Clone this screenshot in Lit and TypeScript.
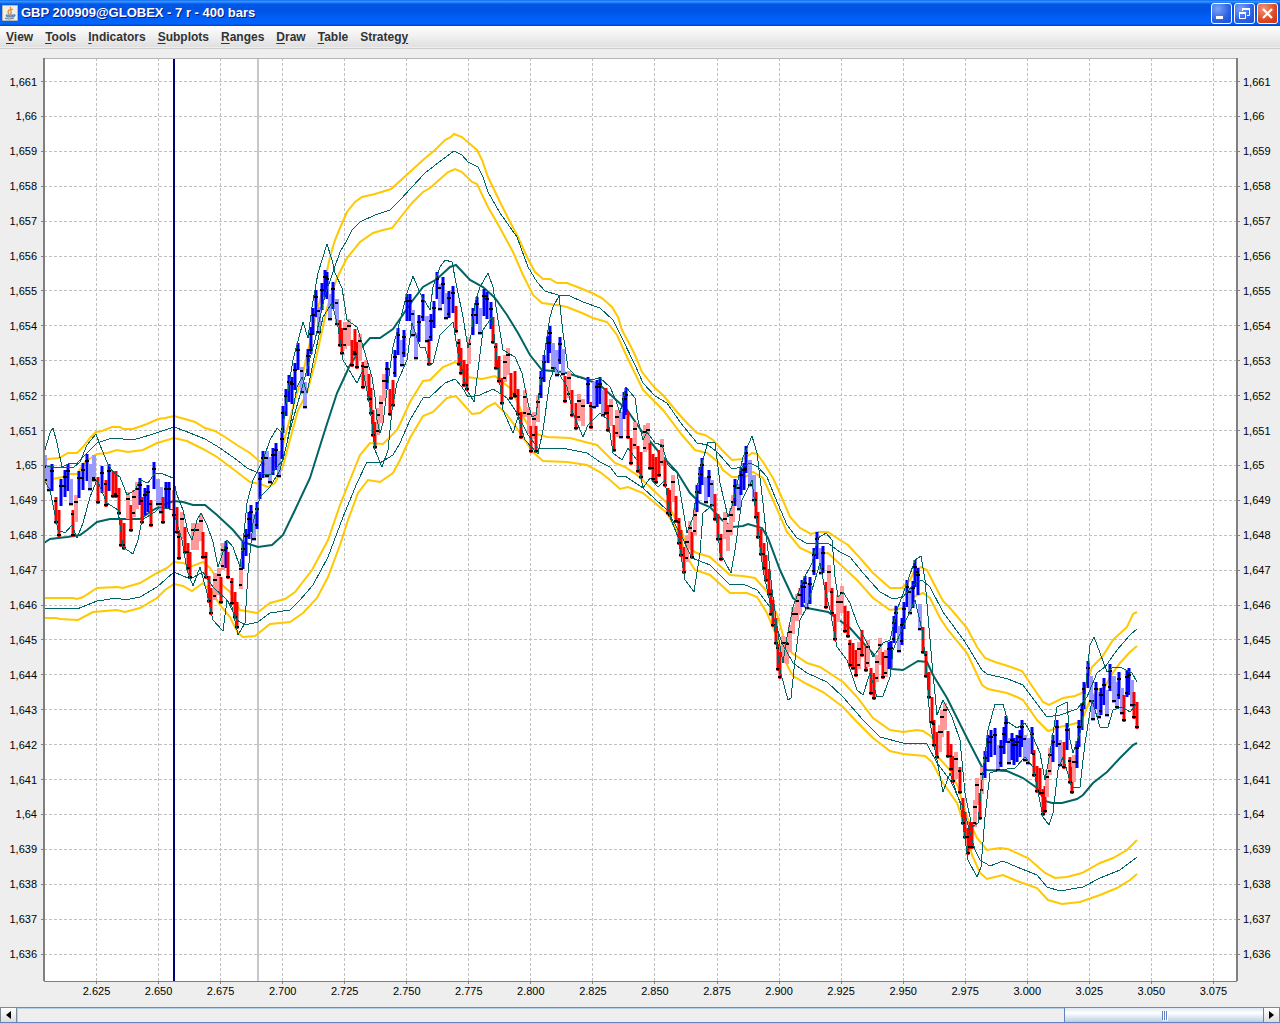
import { LitElement, html, svg, css } from "lit";
import { customElement, property } from "lit/decorators.js";

/* Plot space: the view box that all series are expressed in. */
const PLOT = { x: 44, y: 58, w: 1193, h: 923 };
const X_TICKS = Array.from({ length: 19 }, (_, i) => ({
  label: (2.625 + i * 0.025).toFixed(3),
  pos: 96.5 + i * 62.05,
}));
const Y_TICKS = Array.from({ length: 26 }, (_, i) => ({
  label: String((1661 - i) / 1000).replace(".", ","),
  pos: 81.5 + i * 34.9,
}));
const xPct = (x: number) => `${((x - PLOT.x) / PLOT.w) * 100}%`;
const yPct = (y: number) => `${((y - PLOT.y) / PLOT.h) * 100}%`;

/* Outer envelope edges. */
const ENVELOPES = [
  "44,462 48,459 59,458 68,453 77,453 83,447 90,438 96,432 102,431 112,427 120,427 123,429 133,429 147,424 158,419 165,418 174,416 185,419 195,422 205,428 215,431 225,437 237,445 250,453 258,460 270,467 280,457 285,437 295,400 303,373 315,320 325,280 330,257 335,240 340,228 347,212 355,202 362,197 375,194 391,189 400,181 412,170 423,160 435,150 445,140 451,137 454,134 462,137 470,144 477,150 482,160 488,177 500,202 510,222 518,237 527,257 535,272 543,279 550,279 557,283 567,283 580,288 592,293 602,298 612,307 618,317 622,330 630,345 635,355 642,372 650,382 655,388 663,395 677,412 687,423 697,433 705,435 713,440 722,450 732,460 743,459 752,453 757,454 763,462 773,478 782,498 790,517 800,528 811,534 818,532 828,532 840,540 848,545 860,558 873,573 890,588 902,588 910,580 915,570 921,567 927,570 933,582 943,601 950,608 967,628 977,647 985,658 995,662 1008,666 1022,671 1030,683 1043,702 1049,705 1063,698 1075,696 1082,693 1087,683 1092,667 1102,657 1113,640 1127,627 1133,614 1137,612",
  "44,485 47,480 63,477 67,474 77,474 85,462 97,454 107,453 117,450 128,452 143,450 157,443 174,438 187,441 203,449 217,457 237,472 250,482 260,484 268,487 275,483 283,466 288,447 298,410 307,393 315,363 327,308 337,278 347,258 360,242 373,233 383,230 392,228 400,218 412,203 423,192 430,188 448,172 455,169 462,172 472,182 477,184 488,207 500,228 513,252 523,275 533,295 542,303 557,305 567,307 582,313 593,318 607,322 617,335 627,357 643,390 655,402 663,410 682,435 695,450 707,453 718,462 723,470 732,477 745,477 753,472 763,478 773,500 787,532 800,548 813,554 828,553 843,567 857,580 873,598 890,610 903,608 913,597 923,593 930,598 940,618 948,630 967,653 982,685 988,689 1007,693 1017,697 1023,700 1037,720 1048,731 1060,727 1077,723 1082,720 1090,700 1097,690 1105,687 1110,677 1120,663 1130,652 1137,646",
  "44,598 73,598 77,599 83,597 97,588 117,587 123,588 140,583 157,573 167,568 174,562 183,563 190,567 203,562 210,568 220,583 230,592 240,610 257,613 270,603 285,599 295,592 312,570 328,540 340,505 348,485 360,455 370,443 383,444 397,430 400,424 410,402 423,381 430,380 443,367 455,362 462,366 467,377 482,379 495,376 510,388 518,403 525,420 533,433 547,437 570,438 585,442 597,445 605,453 615,463 625,467 637,475 650,487 667,503 680,527 687,547 697,553 710,557 730,575 743,576 755,578 763,587 768,593 778,617 785,643 792,653 807,663 820,667 843,682 857,697 873,718 890,730 903,732 917,730 923,731 932,737 938,757 950,770 958,787 967,817 977,838 987,850 1000,848 1008,849 1028,858 1045,873 1055,878 1067,877 1082,873 1100,863 1113,858 1127,850 1137,840",
  "44,618 56,618 60,619 78,620 93,612 117,610 125,612 140,608 157,598 165,590 174,584 183,586 192,591 203,583 212,592 220,605 230,617 238,633 243,637 255,636 270,624 290,622 303,613 317,598 328,577 340,545 348,520 358,493 368,480 380,482 393,473 400,460 410,438 423,416 433,412 447,398 456,396 472,414 480,413 487,407 495,403 507,415 518,430 533,452 543,461 567,462 587,465 600,472 610,480 620,489 628,487 643,493 667,513 678,533 687,557 695,570 710,575 730,593 747,593 757,597 767,613 777,637 788,667 793,676 807,684 823,692 843,707 857,722 873,738 890,751 903,754 925,756 932,762 943,783 957,803 967,833 972,855 980,873 987,879 1003,875 1017,881 1037,888 1048,900 1062,904 1080,902 1100,895 1117,888 1130,880 1137,874",
];

/* Thin lines: envelope midlines, then the fast channel. */
const THIN = [
  "44,465 47,466 60,468 70,463 77,463 87,453 97,443 112,438 133,440 150,435 174,427 185,431 205,439 220,448 237,460 247,468 258,473 270,475 283,460 290,430 300,395 315,340 325,295 333,272 340,252 347,240 352,230 360,222 375,215 390,210 400,200 412,187 425,173 443,159 454,151 462,155 468,162 478,167 483,177 488,192 500,213 517,237 528,267 537,282 545,291 558,295 570,296 583,302 600,308 613,320 622,338 635,365 643,383 655,396 667,403 680,422 697,443 708,445 717,452 732,469 742,467 750,463 758,467 767,477 775,497 787,525 797,538 808,544 828,543 840,552 850,557 863,573 880,592 893,599 903,597 913,585 922,580 930,587 943,612 965,642 982,670 987,674 1008,679 1023,685 1047,717 1060,715 1077,709 1087,697 1097,673 1105,667 1117,650 1130,635 1137,629",
  "44,608 77,609 97,601 117,598 125,600 140,597 157,587 174,572 190,579 203,572 213,587 227,600 237,620 245,625 258,622 270,613 290,610 300,600 313,585 328,557 343,517 357,483 367,462 380,463 393,455 400,443 410,420 423,398 430,397 445,383 455,379 462,387 468,397 480,395 493,389 507,398 517,413 528,435 538,448 567,449 587,453 600,462 610,467 617,476 625,476 643,488 667,510 680,533 692,558 710,565 730,585 743,584 757,590 770,607 782,643 793,663 807,673 827,682 843,697 863,720 880,737 903,743 927,744 937,763 950,780 963,807 975,850 980,860 990,866 1003,861 1017,867 1037,875 1047,887 1060,891 1083,887 1100,878 1120,870 1137,857",
  "44,453 50,433 53,428 57,443 62,467 73,468 80,462 87,445 96,434 100,445 107,462 113,472 120,477 127,495 135,490 140,480 148,483 155,473 163,474 173,478 177,495 183,510 188,532 192,540 197,520 201,513 207,525 213,542 218,567 227,540 233,547 240,567 243,543 247,503 253,480 263,460 270,440 277,428 282,433 287,397 293,360 303,322 308,338 312,307 318,273 327,244 332,260 335,273 342,288 347,320 357,327 362,343 367,360 372,377 375,397 377,420 380,433 383,423 387,390 393,347 402,313 407,293 413,276 420,293 430,310 433,287 440,267 445,260 452,262 457,288 463,317 468,348 471,335 475,303 480,287 488,273 493,287 498,320 503,350 515,357 522,373 528,403 532,417 536,415 543,363 550,317 553,307 559,296 563,333 568,368 577,377 590,380 600,378 610,387 615,398 620,413 626,387 635,398 638,420 643,440 647,432 655,443 662,445 668,465 677,473 682,503 687,533 693,517 700,470 708,442 715,443 720,483 728,517 733,503 743,457 752,436 757,453 763,503 772,590 779,640 783,663 787,637 793,607 803,580 812,563 818,538 826,533 832,540 835,577 838,597 843,592 850,603 857,623 867,643 873,657 883,643 890,640 897,610 907,583 915,560 921,556 925,580 932,663 937,715 943,700 952,717 960,740 965,793 972,827 978,823 982,780 988,730 995,704 1003,704 1008,722 1017,728 1025,723 1033,737 1040,753 1045,780 1050,753 1057,707 1067,702 1070,740 1073,753 1082,727 1087,673 1090,645 1094,637 1100,653 1107,672 1113,667 1122,668 1132,673 1137,682",
  "44,480 50,490 58,530 65,533 72,525 77,538 83,523 90,497 97,480 107,503 118,510 123,547 133,554 138,540 142,520 155,512 160,507 173,510 182,540 187,570 193,586 200,567 207,593 213,620 223,631 227,600 232,607 238,635 245,623 248,573 253,523 260,497 270,487 280,470 287,443 297,387 302,377 307,393 313,363 323,317 332,303 338,327 343,360 357,383 363,370 370,407 375,450 382,467 388,450 392,410 397,383 407,360 412,323 420,347 425,347 430,365 433,363 440,335 453,322 458,353 467,390 474,402 478,370 483,330 492,317 497,360 503,410 513,433 518,417 525,440 538,454 543,430 550,380 555,367 567,387 573,413 583,437 588,425 600,413 608,420 613,453 622,460 628,448 637,460 643,488 650,478 658,487 665,480 670,517 678,537 685,580 694,592 700,553 703,513 715,503 720,553 731,573 735,550 742,500 752,480 757,523 763,570 773,617 780,670 788,700 791,698 795,660 800,620 807,607 812,590 820,563 825,590 830,610 837,647 847,660 857,690 863,695 870,673 877,697 883,696 890,677 893,650 903,627 915,600 922,630 927,673 930,723 943,792 950,773 960,803 968,860 977,877 981,867 985,817 990,773 1000,770 1015,768 1025,757 1033,767 1043,817 1049,825 1053,813 1058,770 1063,757 1072,788 1080,787 1085,743 1092,700 1100,727 1108,727 1113,710 1122,707 1130,712 1137,703",
];

const AVERAGE =
  "44,543 50,539 67,537 80,535 87,530 97,522 110,519 140,519 153,510 163,505 174,501 183,502 193,505 205,505 217,515 233,530 243,542 258,547 272,545 283,535 295,510 310,478 325,430 337,393 350,365 362,347 370,338 380,338 393,329 413,300 423,287 437,279 450,267 456,265 470,280 483,287 495,298 507,315 518,333 530,355 542,370 563,372 583,378 600,385 613,397 627,410 643,433 663,457 677,472 690,493 700,503 710,507 722,520 732,527 743,526 748,524 762,528 768,538 780,570 793,598 807,608 828,612 850,628 867,647 877,658 892,669 903,670 918,661 927,662 933,675 947,698 967,738 982,767 987,770 1007,771 1023,778 1037,788 1045,801 1052,803 1062,803 1077,799 1083,795 1093,783 1107,772 1120,758 1133,745 1137,743";

/* Range bars: x, high and trend (b/l up trend, r/p down trend). */
const BARS =
  "45 455 l,49 465 l,52 464 b,56 497 r,59 510 r,61 479 b,65 470 b,68 464 b,71 479 l,73 510 r,76 495 p,79 471 b,83 463 b,87 454 b,90 464 l,94 455 l,98 477 r,102 466 b,106 480 r,109 464 b,113 471 r,116 471 r,119 488 r,121 520 r,124 523 r,128 492 p,131 505 r,134 490 p,137 482 p,140 478 b,142 497 r,145 488 b,148 485 b,151 500 r,154 462 b,158 479 l,161 487 l,163 497 r,166 482 b,169 482 b,174 490 r,177 507 r,179 533 r,182 512 p,185 527 r,188 543 r,190 552 r,193 523 p,197 523 p,201 514 p,203 532 r,206 552 r,209 576 r,211 588 r,215 573 p,219 568 p,221 577 r,223 543 p,226 541 b,228 552 r,232 578 r,235 592 r,237 602 r,241 562 p,243 542 b,246 529 b,249 512 b,251 505 b,254 514 l,257 502 b,260 472 b,263 451 b,267 451 l,270 457 l,273 448 b,276 443 b,279 451 l,282 432 b,283 406 b,286 389 b,289 375 b,292 377 b,295 363 b,298 343 b,302 367 l,305 382 l,308 349 b,311 327 b,313 308 b,316 290 b,319 307 l,322 283 b,325 270 b,327 272 b,330 294 l,333 282 b,337 299 l,340 320 r,342 328 r,345 322 p,349 319 p,352 340 r,355 329 r,357 342 r,360 334 p,363 362 r,366 360 p,369 374 r,371 388 r,373 410 r,375 422 r,378 408 p,381 396 p,384 374 p,387 362 b,390 389 r,393 380 r,395 350 b,398 328 b,402 340 l,404 330 b,407 294 b,410 294 b,413 310 l,416 333 l,419 315 b,423 294 b,427 316 l,429 339 r,431 314 b,434 301 b,437 272 b,440 284 l,443 277 b,446 293 l,449 291 b,453 286 b,456 306 r,459 339 r,461 348 r,464 360 r,467 364 r,469 337 p,473 308 b,477 297 b,480 308 l,484 289 b,487 292 b,491 302 b,493 317 r,496 343 r,499 356 r,502 378 r,505 355 p,508 348 p,511 373 r,515 371 r,518 389 r,521 412 r,525 390 p,529 407 p,531 426 r,534 412 p,536 426 r,538 395 p,541 371 b,544 355 b,548 336 b,550 326 b,553 343 l,557 350 l,560 337 b,563 349 l,565 376 r,569 371 p,572 390 r,576 403 r,579 394 p,583 399 p,588 377 b,591 402 r,594 382 l,597 380 b,600 377 b,603 390 l,606 388 r,608 405 r,611 399 p,614 425 r,617 410 p,621 412 l,624 392 b,626 388 b,628 412 r,631 438 r,635 422 p,638 446 r,641 452 r,645 425 p,648 423 p,650 443 r,653 454 r,656 457 r,659 450 r,662 439 p,665 460 r,668 488 r,670 490 r,673 475 p,676 496 r,679 518 r,681 530 r,684 547 r,687 535 p,690 521 p,692 532 r,695 508 p,697 485 b,700 467 b,702 458 b,706 477 l,709 470 b,712 480 l,715 494 r,718 514 r,721 534 r,725 512 p,728 524 p,731 508 p,733 495 p,735 479 b,739 484 l,741 468 b,744 463 b,746 446 b,750 460 l,754 475 l,756 492 r,758 512 r,761 529 r,764 543 r,766 555 r,769 569 r,771 589 r,773 600 r,776 618 r,778 644 r,780 652 r,783 636 p,787 637 p,790 625 p,793 607 p,797 594 p,800 588 p,802 580 b,805 576 b,807 583 l,810 577 b,814 548 b,817 532 b,821 548 l,823 546 b,826 582 r,829 565 p,832 588 r,835 614 r,838 595 p,842 586 p,845 606 r,848 611 r,850 640 r,853 643 r,856 650 r,859 642 p,862 630 r,866 645 r,868 640 p,871 668 r,874 673 r,877 655 p,880 638 p,883 652 r,886 650 p,889 642 b,891 641 b,894 616 b,896 606 b,899 626 l,902 618 b,904 602 b,907 580 b,910 588 l,913 581 b,915 560 b,918 568 b,920 604 l,923 627 r,926 651 r,929 672 r,932 697 r,934 720 r,937 732 r,940 725 p,942 710 p,945 703 p,948 731 r,951 744 r,953 756 r,956 752 p,960 767 r,963 798 r,965 812 r,968 828 r,970 822 r,972 822 r,975 800 p,977 778 p,980 793 r,982 767 p,985 751 b,988 735 b,991 730 b,995 728 b,998 745 l,1001 740 b,1004 727 b,1006 716 b,1009 738 l,1012 733 b,1014 738 b,1017 735 b,1020 730 b,1022 720 b,1025 735 l,1028 738 l,1032 727 b,1034 750 r,1037 766 r,1040 768 r,1043 789 r,1045 786 r,1047 770 p,1050 748 p,1053 735 b,1057 720 b,1060 740 l,1064 742 r,1067 723 b,1070 757 r,1072 767 r,1074 755 p,1077 741 b,1079 720 b,1082 703 b,1084 682 b,1088 661 b,1091 676 l,1093 694 l,1096 682 b,1099 692 l,1101 688 b,1104 678 b,1107 690 l,1110 664 b,1114 676 l,1117 682 l,1119 672 b,1122 688 l,1124 695 r,1127 670 b,1129 668 b,1132 680 l,1134 692 r,1137 702 r"
    .split(",")
    .map((entry) => {
      const [x, high, trend] = entry.split(" ");
      return { x: Number(x), high: Number(high), trend };
    });
const RANGE = 27;
const COLORS: Record<string, string> = {
  b: "#0000ff",
  l: "#9999ff",
  r: "#ff0000",
  p: "#ff9999",
};

@customElement("price-chart")
class PriceChart extends LitElement {
  static styles = css`
    :host {
      display: grid;
      grid-template-columns: 44px minmax(0, 1fr) 43px;
      grid-template-rows: minmax(0, 1fr) 26px;
      padding-top: 9px;
      background: #eee;
      font: 11px "Liberation Sans", Arial, sans-serif;
    }
    svg {
      display: block;
      width: 100%;
      height: 100%;
      min-height: 0;
      overflow: visible;
    }
    .plot {
      background: #fff;
    }
    .bottom {
      grid-column: 2;
    }
    line,
    polyline,
    path,
    rect {
      vector-effect: non-scaling-stroke;
      shape-rendering: crispEdges;
      fill: none;
    }
    text {
      fill: #000;
    }
    .grid {
      stroke: #c0c0c0;
      stroke-dasharray: 3 2;
    }
    .envelope {
      stroke: #ffc800;
      stroke-width: 2px;
      shape-rendering: auto;
    }
    .average {
      stroke: #006464;
      stroke-width: 2px;
      shape-rendering: auto;
    }
    .thin {
      stroke: #006464;
    }
    .bar {
      stroke-width: 3px;
      shape-rendering: auto;
    }
    .light {
      stroke-width: 4px;
    }
    .dark {
      stroke-width: 2px;
      shape-rendering: crispEdges;
    }
    .mark {
      stroke: #000;
      stroke-width: 2px;
    }
    .session {
      stroke: #c8c8c8;
      stroke-width: 2px;
    }
    .cursor {
      stroke: #000078;
      stroke-width: 2px;
    }
    .frame {
      stroke: #808080;
      stroke-width: 2px;
    }
    .edge {
      stroke: #b4b4b4;
    }
    .tick {
      stroke: #808080;
    }
  `;

  private bars() {
    let marks = "";
    let previous = BARS[0].high + 12;
    const paths = BARS.map(({ x, high, trend }, i) => {
      const rising = trend === "b" || trend === "p";
      const low = high + RANGE;
      const close = rising ? high + 7 : low - 2;
      marks += `M${x - 2} ${close}H${x + 2}`;
      if (i % 3 === 0) {
        const open = Math.min(Math.max(previous, high + 4), low - 4);
        marks += `M${x - 2} ${open}H${x + 1}`;
      }
      previous = close;
      const tone = trend === "l" || trend === "p" ? "light" : "solid";
      return svg`<path class="bar ${tone}" stroke=${COLORS[trend]} d="M${x} ${high}V${low}" />`;
    });
    return svg`${paths}<path class="mark" d=${marks} />`;
  }

  private valueAxis(side: "left" | "right") {
    const left = side === "left";
    return html`<svg aria-label="Price axis, ${side}">
      ${Y_TICKS.map(
        (t) => svg`
        <line class="tick" x1=${left ? 41 : 1} x2=${left ? 44 : 3} y1=${yPct(t.pos)} y2=${yPct(t.pos)} />
        <text x=${left ? 37 : 6} y=${yPct(t.pos)} dy="4" text-anchor=${left ? "end" : "start"}>${t.label}</text>`
      )}
    </svg>`;
  }

  render() {
    const right = PLOT.x + PLOT.w;
    const bottom = PLOT.y + PLOT.h;
    return html`
      ${this.valueAxis("left")}
      <svg
        class="plot"
        role="img"
        aria-label="GBP range bars with envelopes"
        viewBox="${PLOT.x} ${PLOT.y} ${PLOT.w} ${PLOT.h}"
        preserveAspectRatio="none"
      >
        ${X_TICKS.map((t) => svg`<line class="grid" x1=${t.pos} x2=${t.pos} y1=${PLOT.y} y2=${bottom} />`)}
        ${Y_TICKS.map((t) => svg`<line class="grid" x1=${PLOT.x} x2=${right} y1=${t.pos} y2=${t.pos} />`)}
        <line class="session" x1="258" x2="258" y1=${PLOT.y} y2=${bottom} />
        ${ENVELOPES.map((p) => svg`<polyline class="envelope" points=${p} />`)}
        <polyline class="average" points=${AVERAGE} />
        ${this.bars()}
        ${THIN.map((p) => svg`<polyline class="thin" points=${p} />`)}
        <line class="cursor" x1="174" x2="174" y1=${PLOT.y} y2=${bottom} />
        <line class="edge" x1=${PLOT.x} x2=${right} y1="58.5" y2="58.5" />
        <path class="frame" d="M44 58V981M1237 58V981" />
        <line class="tick" x1=${PLOT.x} x2=${right} y1="981.5" y2="981.5" />
      </svg>
      ${this.valueAxis("right")}
      <svg class="bottom" aria-label="Bar axis">
        ${X_TICKS.map(
          (t) => svg`
          <line class="tick" x1=${xPct(t.pos)} x2=${xPct(t.pos)} y1="0" y2="3" />
          <text x=${xPct(t.pos)} y="14" text-anchor="middle">${t.label}</text>`
        )}
      </svg>
    `;
  }
}

@customElement("chart-scrollbar")
class ChartScrollbar extends LitElement {
  @property({ type: Number }) extent = 16;

  static styles = css`
    :host {
      display: flex;
      height: 14px;
      border: 1px solid #7a8a99;
      border-bottom-color: #6382bf;
      background: #eee;
      box-shadow: 0 1px #b8cfe5;
    }
    .arrow {
      width: 15px;
      padding: 0;
      border: 0;
      background: linear-gradient(#fff, #ddd);
      display: grid;
      place-items: center;
    }
    .track {
      flex: 1;
      display: flex;
      justify-content: flex-end;
      border-left: 1px solid #7a8a99;
      box-shadow: inset 1px 1px #b8cfe5;
    }
    .thumb {
      box-sizing: border-box;
      display: flex;
      justify-content: center;
      align-items: center;
      gap: 1px;
      border: solid #6382bf;
      border-width: 0 1px;
      background: linear-gradient(#dce8f3, #fff 35%, #b8cfe5);
    }
    .grip {
      width: 1px;
      height: 9px;
      background: #6382bf;
      box-shadow: 1px 1px #fff;
    }
  `;

  render() {
    return html`
      <button class="arrow" aria-label="Scroll left">
        <svg width="5" height="8" viewBox="0 0 5 8"><path d="M5 0V8L0 4Z" /></svg>
      </button>
      <div
        class="track"
        role="scrollbar"
        aria-label="Bars"
        aria-orientation="horizontal"
        aria-valuemin="0"
        aria-valuemax="100"
        aria-valuenow="100"
      >
        <div class="thumb" style="width:${this.extent}%">
          <span class="grip"></span><span class="grip"></span><span class="grip"></span>
        </div>
      </div>
      <button class="arrow" aria-label="Scroll right">
        <svg width="5" height="8" viewBox="0 0 5 8"><path d="M0 0V8L5 4Z" /></svg>
      </button>
    `;
  }
}

/* Menu titles as text before, at and after the mnemonic letter. */
const MENUS = [
  ["", "V", "iew"],
  ["", "T", "ools"],
  ["", "I", "ndicators"],
  ["", "S", "ubplots"],
  ["", "R", "anges"],
  ["", "D", "raw"],
  ["", "T", "able"],
  ["Strateg", "y", ""],
];

@customElement("app-root")
class AppRoot extends LitElement {
  static styles = css`
    :host {
      display: flex;
      flex-direction: column;
      height: 100vh;
      background: #eee;
      font-family: "Liberation Sans", Arial, sans-serif;
    }
    .title {
      display: flex;
      align-items: center;
      box-sizing: border-box;
      height: 26px;
      padding: 0 2px;
      gap: 3px;
      background: linear-gradient(
        #0a6cf0,
        #3a93ff 6%,
        #0058e6 16%,
        #0054e3 40%,
        #005df5 65%,
        #0066ff 90%,
        #0040cc
      );
    }
    h1 {
      flex: 1;
      margin: 0;
      font-size: 13px;
      line-height: 16px;
      font-weight: bold;
      color: #fff;
      text-shadow: 1px 1px #0a1883;
      white-space: nowrap;
    }
    .control {
      width: 21px;
      height: 21px;
      padding: 0;
      border: 1px solid #fff;
      border-radius: 3px;
      background: radial-gradient(circle at 30% 25%, #7ba3f5, #2b60e4 60%, #1a4fd8);
    }
    .control svg,
    .java {
      display: block;
    }
    .controls {
      display: flex;
      gap: 2px;
    }
    .close {
      background: radial-gradient(circle at 30% 25%, #f0957b, #dc4a22 60%, #c23410);
    }
    .menus {
      display: flex;
      box-sizing: border-box;
      height: 23px;
      padding: 0 6px;
      gap: 12px;
      border-bottom: 1px solid #ccc;
      background: linear-gradient(#fff, #dedede);
      box-shadow: inset 0 -1px #eee;
    }
    .menu {
      padding: 0 0 1px;
      border: 0;
      background: none;
      color: #333;
      font: bold 12px/20px "Liberation Sans", Arial, sans-serif;
    }
    u {
      text-underline-offset: 2px;
    }
    price-chart {
      flex: 1;
      min-height: 0;
    }
    chart-scrollbar {
      margin-bottom: 1px;
    }
  `;

  render() {
    return html`
      <header class="title">
        <svg class="java" width="16" height="16" viewBox="0 0 16 16" aria-hidden="true">
          <rect width="16" height="16" rx="1" fill="#b9b9b0" />
          <rect x="1" y="1" width="14" height="14" fill="#eeeeea" />
          <path d="M8 2Q10 4 7 5Q5 7 7 9M11 4Q8 5 9 7Q10 8 8 9" fill="none" stroke="#e8862a" stroke-width="1.2" />
          <path d="M4 10H11L10 12H5ZM11 10Q14 9 13 11Q12 12 10 12" fill="#8fa8bf" stroke="#5f7f9e" />
          <path d="M3 13Q7 15 12 13" fill="none" stroke="#5f7f9e" stroke-width="1.2" />
        </svg>
        <h1>GBP 200909@GLOBEX - 7 r - 400 bars</h1>
        <div class="controls">
          <button class="control" aria-label="Minimize">
            <svg width="19" height="19" viewBox="0 0 19 19"><path d="M4 12H11V15H4Z" fill="#fff" /></svg>
          </button>
          <button class="control" aria-label="Restore">
            <svg width="19" height="19" viewBox="0 0 19 19" fill="none" stroke="#fff">
              <path d="M7.500 7V4.500H14.500V11.500H12M4.500 8.500H10.500V14.500H4.500Z" />
              <path d="M7 5H15M4 9H11" stroke-width="2" />
            </svg>
          </button>
          <button class="control close" aria-label="Close">
            <svg width="19" height="19" viewBox="0 0 19 19"><path d="M5 5L14 14M14 5L5 14" stroke="#fff" stroke-width="2.200" /></svg>
          </button>
        </div>
      </header>
      <nav class="menus" aria-label="Main menu">
        ${MENUS.map(([before, key, after]) => html`<button class="menu">${before}<u>${key}</u>${after}</button>`)}
      </nav>
      <price-chart></price-chart>
      <chart-scrollbar></chart-scrollbar>
    `;
  }
}
